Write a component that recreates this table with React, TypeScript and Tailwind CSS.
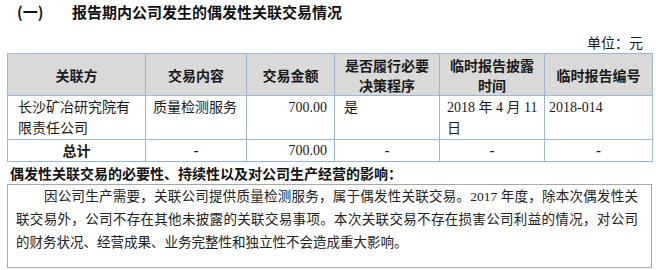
const serif = "font-['Liberation_Serif','Noto_Sans_CJK_SC',serif]";
const hei = "font-['Noto_Sans_CJK_SC','Liberation_Sans',sans-serif]";

const headers = ["关联方", "交易内容", "交易金额", "是否履行必要决策程序", "临时报告披露时间", "临时报告编号"];

export default function App() {
    return (
        <div className={`w-[656px] h-[270px] bg-white text-[#1a1a1a] ${serif} overflow-hidden`}>
            <div className={`flex items-center h-[24px] pl-[17px] ${hei} font-bold text-[15px] text-[#111]`}>
                <span className="w-[55px]">(一)</span>
                <span>报告期内公司发生的偶发性关联交易情况</span>
            </div>
            <div className="flex justify-end h-[29px] items-center pr-[13px] pt-[10px] text-[14px]">
                单位：元
            </div>

            <table className="ml-[7px] w-[645px] table-fixed border-collapse text-[14px] leading-[21px]">
                <colgroup>
                    <col className="w-[138px]" />
                    <col className="w-[101px]" />
                    <col className="w-[88px]" />
                    <col className="w-[105px]" />
                    <col className="w-[105px]" />
                    <col className="w-[108px]" />
                </colgroup>
                <thead>
                    <tr className="h-[42px] bg-[#d9d9d9]">
                        {headers.map((h) => (
                            <th
                                key={h}
                                className={`border border-[#9db5d6] px-[6px] ${hei} font-bold text-[14px] leading-[20px] text-center`}
                            >
                                {h}
                            </th>
                        ))}
                    </tr>
                </thead>
                <tbody>
                    <tr className="h-[43px] align-top">
                        <td className="border border-[#9db5d6] pl-[10px] pr-[14px] pt-[1px]">长沙矿冶研究院有限责任公司</td>
                        <td className="border border-[#9db5d6] pl-[7px] pt-[1px]">质量检测服务</td>
                        <td className="border border-[#9db5d6] pr-[7px] pt-[1px] text-right">700.00</td>
                        <td className="border border-[#9db5d6] pl-[9px] pt-[1px]">是</td>
                        <td className="border border-[#9db5d6] pl-[7px] pr-[4px] pt-[1px]">2018 年 4 月 11 日</td>
                        <td className="border border-[#9db5d6] pl-[4px] pt-[1px]">2018-014</td>
                    </tr>
                    <tr className="h-[21px]">
                        <td className={`border border-[#9db5d6] text-center ${hei} font-bold`}>总计</td>
                        <td className="border border-[#9db5d6] text-center font-bold">-</td>
                        <td className="border border-[#9db5d6] pr-[7px] text-right">700.00</td>
                        <td className="border border-[#9db5d6] text-center font-bold">-</td>
                        <td className="border border-[#9db5d6] text-center font-bold">-</td>
                        <td className="border border-[#9db5d6] text-center font-bold">-</td>
                    </tr>
                </tbody>
            </table>

            <div className={`h-[22px] flex items-center pl-[10px] ${hei} font-bold text-[14px] text-[#111]`}>
                偶发性关联交易的必要性、持续性以及对公司生产经营的影响：
            </div>

            <div className="ml-[7px] w-[645px] h-[84px] border border-[#a8a8a8] pl-[8px] pr-[13px] text-[13.5px] leading-[23px] text-[#222]">
                <p className="whitespace-nowrap text-justify [text-align-last:justify] pl-[28px]">
                    因公司生产需要，关联公司提供质量检测服务，属于偶发性关联交易。2017 年度，除本次偶发性关
                </p>
                <p className="whitespace-nowrap text-justify [text-align-last:justify]">
                    联交易外，公司不存在其他未披露的关联交易事项。本次关联交易不存在损害公司利益的情况，对公司
                </p>
                <p className="whitespace-nowrap">的财务状况、经营成果、业务完整性和独立性不会造成重大影响。</p>
            </div>
        </div>
    );
}
